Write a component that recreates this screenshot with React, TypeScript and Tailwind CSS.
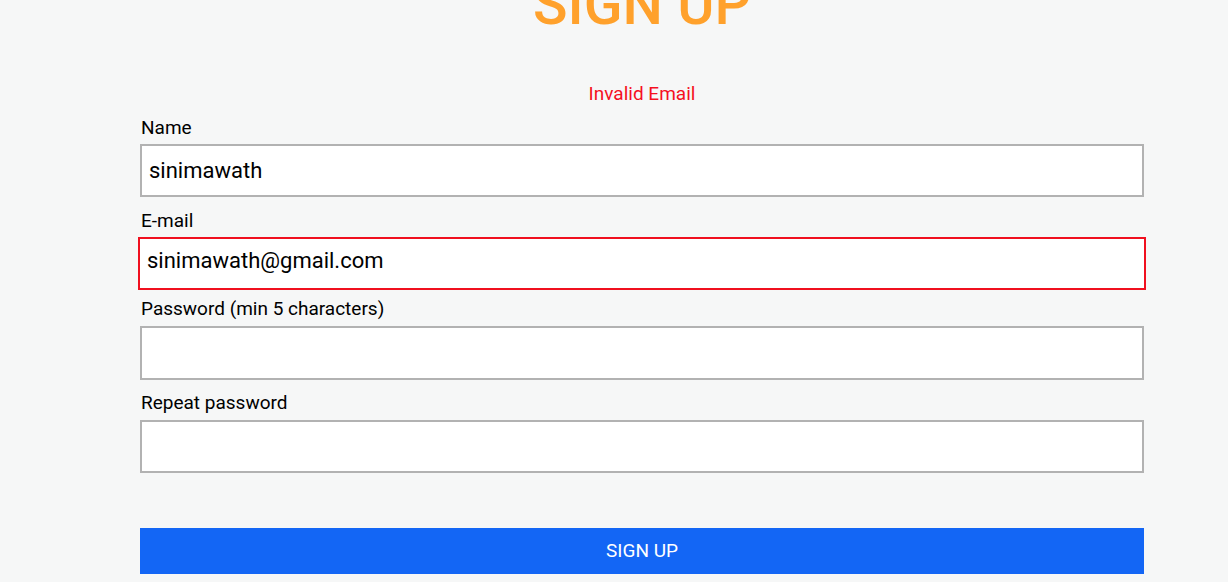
import React from "react";

export default function App() {
  const font = { fontFamily: "Roboto, 'Liberation Sans', sans-serif" };
  return (
    <div className="w-[1228px] h-[582px] overflow-hidden bg-[#f6f7f7]" style={font}>
      <div className="ml-[140px] w-[1004px] flex flex-col">
        <h1 className="mt-[-23px] h-[56px] text-center text-[57px] leading-[56px] font-medium text-[#ffa12c]">
          SIGN UP
        </h1>
        <div className="mt-[50px] h-[22px] text-center text-[19px] leading-[22px] text-[#f5101f]">
          Invalid Email
        </div>
        <label className="mt-[12px] ml-px h-[22px] text-[19px] leading-[22px] text-black">Name</label>
        <div className="mt-[5px] h-[53px] border-2 border-[#b2b2b2] bg-white flex items-center pl-[7px] text-[22px] text-black">
          sinimawath
        </div>
        <label className="mt-[13px] ml-px h-[22px] text-[19px] leading-[22px] text-black">E-mail</label>
        <div className="mt-[5px] mx-[-2px] h-[53px] border-2 border-[#f0101f] bg-white flex items-center pl-[7px] pb-[6px] text-[22px] text-black">
          sinimawath@gmail.com
        </div>
        <label className="mt-[8px] ml-px h-[22px] text-[19px] leading-[22px] text-black">
          Password (min 5 characters)
        </label>
        <div className="mt-[6px] h-[54px] border-2 border-[#b2b2b2] bg-white" />
        <label className="mt-[12px] ml-px h-[22px] text-[19px] leading-[22px] text-black">Repeat password</label>
        <div className="mt-[6px] h-[53px] border-2 border-[#b2b2b2] bg-white" />
        <button className="mt-[55px] h-[46px] bg-[#1366f5] text-white text-[19px] flex items-center justify-center">
          SIGN UP
        </button>
      </div>
    </div>
  );
}
